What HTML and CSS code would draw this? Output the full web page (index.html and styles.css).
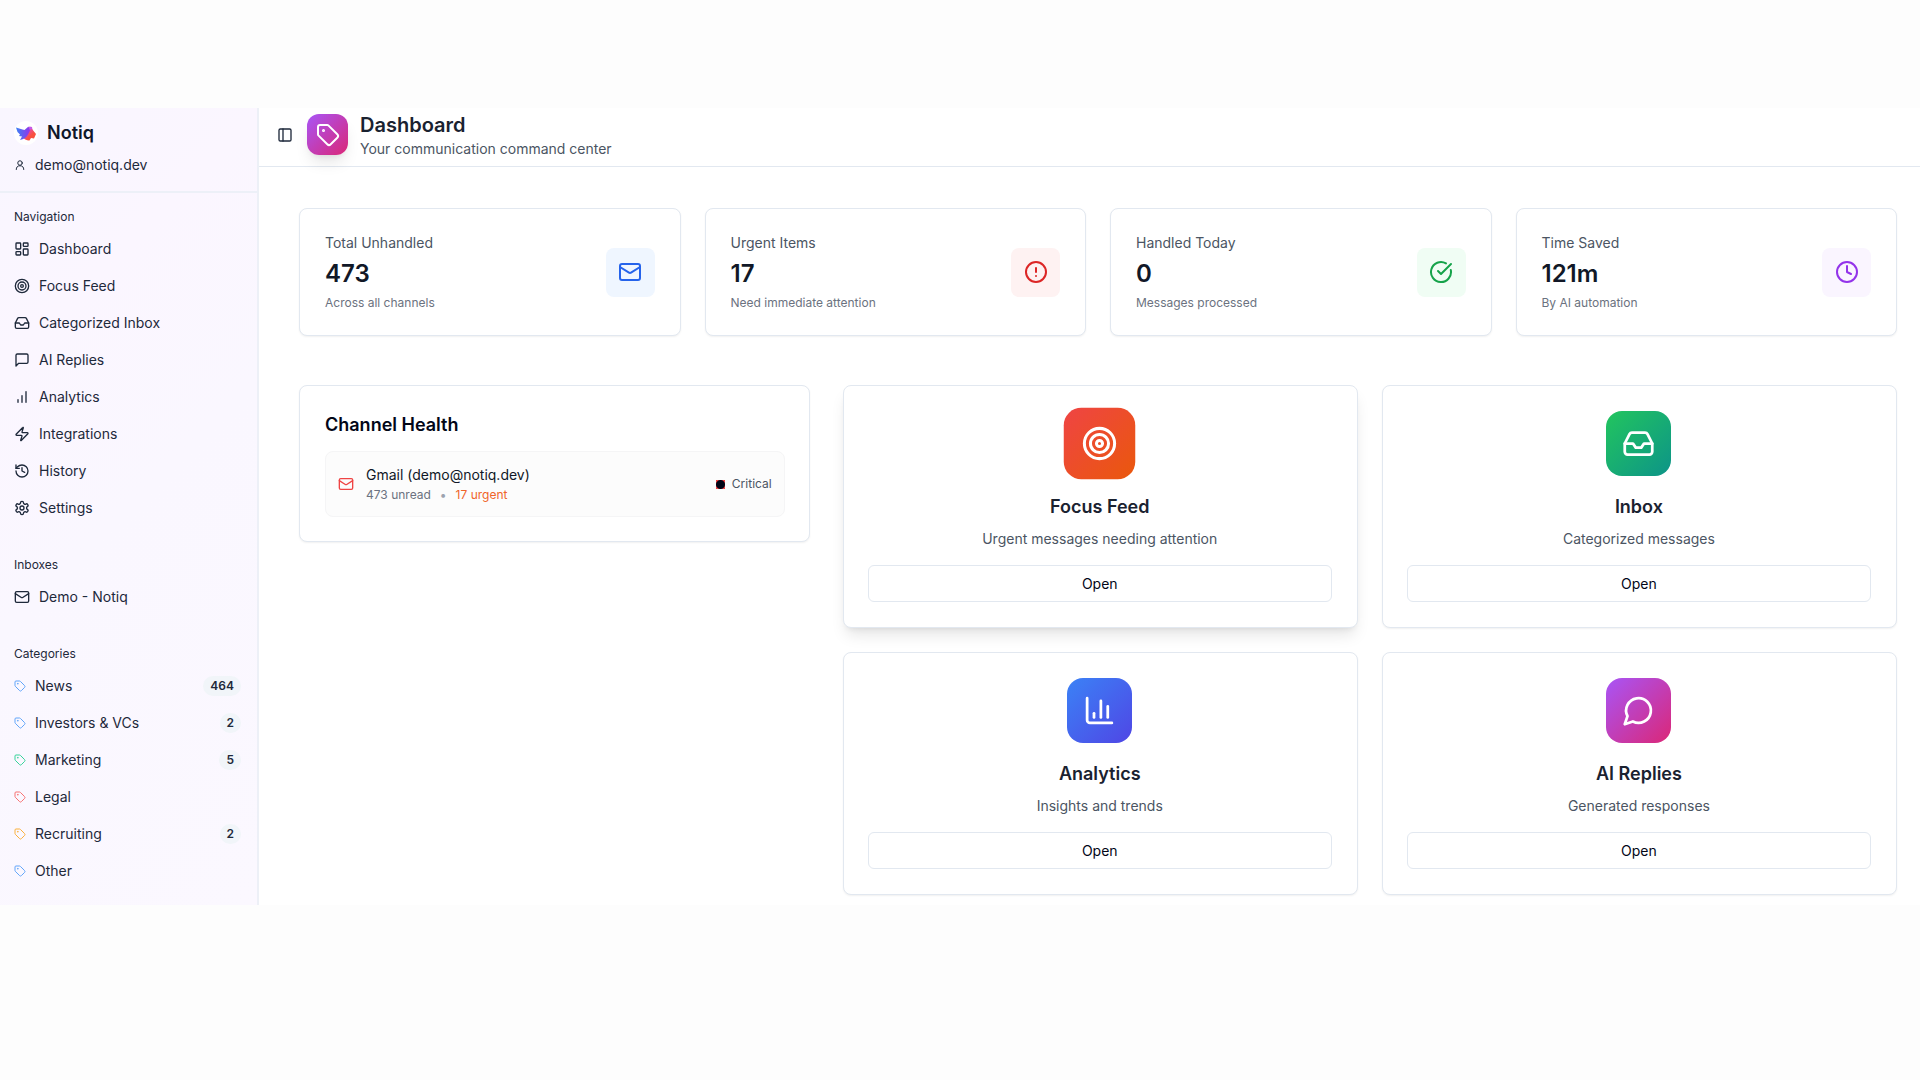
FILE: index.html
```html
<!DOCTYPE html>
<html lang="en">
<head>
    <meta charset="UTF-8">
    <meta name="viewport" content="width=device-width, initial-scale=1.0">
    <title>Notiq - Dashboard</title>
    <link rel="stylesheet" href="styles.css">
</head>
<body>
    <!-- icon sprite -->
    <svg class="sprite" aria-hidden="true">
        <symbol id="user" viewBox="0 0 24 24"><circle cx="12" cy="8" r="4.500"/><path d="M19.500 21a7.500 7.500 0 0 0-15 0"/></symbol>
        <symbol id="dashboard" viewBox="0 0 24 24"><rect width="7" height="9" x="3" y="3" rx="1"/><rect width="7" height="5" x="14" y="3" rx="1"/><rect width="7" height="9" x="14" y="12" rx="1"/><rect width="7" height="5" x="3" y="16" rx="1"/></symbol>
        <symbol id="target" viewBox="0 0 24 24"><circle cx="12" cy="12" r="10"/><circle cx="12" cy="12" r="6"/><circle cx="12" cy="12" r="2"/></symbol>
        <symbol id="inbox" viewBox="0 0 24 24"><path d="M22 12h-6l-2 3h-4l-2-3H2"/><path d="M5.45 5.11 2 12v6a2 2 0 0 0 2 2h16a2 2 0 0 0 2-2v-6l-3.45-6.89A2 2 0 0 0 16.76 4H7.24a2 2 0 0 0-1.79 1.11z"/></symbol>
        <symbol id="message" viewBox="0 0 24 24"><path d="M21 15a2 2 0 0 1-2 2H7l-4 4V5a2 2 0 0 1 2-2h14a2 2 0 0 1 2 2z"/></symbol>
        <symbol id="bars" viewBox="0 0 24 24"><path d="M12 20V10"/><path d="M18 20V4"/><path d="M6 20v-4"/></symbol>
        <symbol id="zap" viewBox="0 0 24 24"><path d="M4 14a1 1 0 0 1-.78-1.63l9.9-10.2a.5.5 0 0 1 .86.46l-1.92 6.02A1 1 0 0 0 13 10h7a1 1 0 0 1 .78 1.63l-9.9 10.2a.5.5 0 0 1-.86-.46l1.92-6.02A1 1 0 0 0 11 14z"/></symbol>
        <symbol id="history" viewBox="0 0 24 24"><path d="M3 12a9 9 0 1 0 9-9 9.75 9.75 0 0 0-6.74 2.74L3 8"/><path d="M3 3v5h5"/><path d="M12 7v5l4 2"/></symbol>
        <symbol id="settings" viewBox="0 0 24 24"><path d="M12.22 2h-.44a2 2 0 0 0-2 2v.18a2 2 0 0 1-1 1.73l-.43.25a2 2 0 0 1-2 0l-.15-.08a2 2 0 0 0-2.73.73l-.22.38a2 2 0 0 0 .73 2.73l.15.1a2 2 0 0 1 1 1.72v.51a2 2 0 0 1-1 1.74l-.15.09a2 2 0 0 0-.73 2.73l.22.38a2 2 0 0 0 2.73.73l.15-.08a2 2 0 0 1 2 0l.43.25a2 2 0 0 1 1 1.73V20a2 2 0 0 0 2 2h.44a2 2 0 0 0 2-2v-.18a2 2 0 0 1 1-1.73l.43-.25a2 2 0 0 1 2 0l.15.08a2 2 0 0 0 2.73-.73l.22-.39a2 2 0 0 0-.73-2.73l-.15-.08a2 2 0 0 1-1-1.74v-.5a2 2 0 0 1 1-1.74l.15-.09a2 2 0 0 0 .73-2.73l-.22-.38a2 2 0 0 0-2.73-.73l-.15.08a2 2 0 0 1-2 0l-.43-.25a2 2 0 0 1-1-1.73V4a2 2 0 0 0-2-2z"/><circle cx="12" cy="12" r="3"/></symbol>
        <symbol id="mail" viewBox="0 0 24 24"><rect width="20" height="16" x="2" y="4" rx="2"/><path d="m22 7-8.97 5.7a1.94 1.94 0 0 1-2.06 0L2 7"/></symbol>
        <symbol id="tag" viewBox="0 0 24 24"><path d="M12.586 2.586A2 2 0 0 0 11.172 2H4a2 2 0 0 0-2 2v7.172a2 2 0 0 0 .586 1.414l8.704 8.704a2.426 2.426 0 0 0 3.42 0l6.58-6.58a2.426 2.426 0 0 0 0-3.42z"/><circle cx="7.5" cy="7.5" r=".5" fill="currentColor"/></symbol>
        <symbol id="panel" viewBox="0 0 24 24"><rect width="18" height="18" x="3" y="3" rx="2"/><path d="M9 3v18"/></symbol>
        <symbol id="alert" viewBox="0 0 24 24"><circle cx="12" cy="12" r="10"/><path d="M12 8v4"/><path d="M12 16h.01"/></symbol>
        <symbol id="check" viewBox="0 0 24 24"><path d="M21.801 10A10 10 0 1 1 17 3.335"/><path d="m9 11 3 3L22 4"/></symbol>
        <symbol id="clock" viewBox="0 0 24 24"><circle cx="12" cy="12" r="10"/><path d="M12 6v6l4 2"/></symbol>
        <symbol id="chart" viewBox="0 0 24 24"><path d="M3 3v16a2 2 0 0 0 2 2h16"/><path d="M18 17V9"/><path d="M13 17V5"/><path d="M8 17v-3"/></symbol>
        <symbol id="chat" viewBox="0 0 24 24"><path d="M7.9 20A9 9 0 1 0 4 16.1L2 22Z"/></symbol>
    </svg>

    <div class="app">
        <aside class="sidebar">
            <div class="sidebar-header">
                <div class="brand">
                    <svg class="logo" viewBox="0 0 24 24" aria-hidden="true">
                        <defs>
                            <linearGradient id="wing" x1="0" y1="0" x2="1" y2="0">
                                <stop offset="0" stop-color="#3b82f6"/>
                                <stop offset="1" stop-color="#9333ea"/>
                            </linearGradient>
                            <linearGradient id="tail" x1="0" y1="0" x2="1" y2="1">
                                <stop offset="0" stop-color="#d946ef"/>
                                <stop offset="0.6" stop-color="#f9503f"/>
                            </linearGradient>
                        </defs>
                        <circle cx="12" cy="12" r="12" fill="#fff"/>
                        <path d="M11 10 15.500 5.500l2.500.5.5 3-4 4z" fill="#c65be6"/>
                        <path d="M10 13.500c2-3 5-4.500 8-5.500l4 5-2 4.500-3-.5-1.500 2.500c-2.500.3-4.500-1-6-2.500z" fill="url(#tail)"/>
                        <path d="M2 6.500 8.500 8.500 10.500 9l4-3.500 1.500 4-2 4c-1.500 3-4.500 5-8 5.500l2-3.500-3-.5 1-1.500-2.500-2.500z" fill="url(#wing)"/>
                    </svg>
                    <span>Notiq</span>
                </div>
                <div class="account">
                    <svg class="icon icon-xs"><use href="#user"/></svg>
                    <span>demo@notiq.dev</span>
                </div>
            </div>

            <nav class="sidebar-nav">
                <h2 class="group-label">Navigation</h2>
                <ul class="menu">
                    <li><a href="#"><svg class="icon icon-sm"><use href="#dashboard"/></svg>Dashboard</a></li>
                    <li><a href="#"><svg class="icon icon-sm"><use href="#target"/></svg>Focus Feed</a></li>
                    <li><a href="#"><svg class="icon icon-sm"><use href="#inbox"/></svg>Categorized Inbox</a></li>
                    <li><a href="#"><svg class="icon icon-sm"><use href="#message"/></svg>AI Replies</a></li>
                    <li><a href="#"><svg class="icon icon-sm"><use href="#bars"/></svg>Analytics</a></li>
                    <li><a href="#"><svg class="icon icon-sm"><use href="#zap"/></svg>Integrations</a></li>
                    <li><a href="#"><svg class="icon icon-sm"><use href="#history"/></svg>History</a></li>
                    <li><a href="#"><svg class="icon icon-sm"><use href="#settings"/></svg>Settings</a></li>
                </ul>

                <h2 class="group-label">Inboxes</h2>
                <ul class="menu">
                    <li><a href="#"><svg class="icon icon-sm"><use href="#mail"/></svg>Demo - Notiq</a></li>
                </ul>

                <h2 class="group-label">Categories</h2>
                <ul class="menu">
                    <li><a href="#"><svg class="icon icon-xs tag-blue"><use href="#tag"/></svg>News<span class="count">464</span></a></li>
                    <li><a href="#"><svg class="icon icon-xs tag-blue"><use href="#tag"/></svg>Investors &amp; VCs<span class="count">2</span></a></li>
                    <li><a href="#"><svg class="icon icon-xs tag-green"><use href="#tag"/></svg>Marketing<span class="count">5</span></a></li>
                    <li><a href="#"><svg class="icon icon-xs tag-red"><use href="#tag"/></svg>Legal</a></li>
                    <li><a href="#"><svg class="icon icon-xs tag-amber"><use href="#tag"/></svg>Recruiting<span class="count">2</span></a></li>
                    <li><a href="#"><svg class="icon icon-xs tag-blue"><use href="#tag"/></svg>Other</a></li>
                </ul>
            </nav>
        </aside>

        <div class="page">
            <header class="topbar">
                <button class="toggle" type="button" aria-label="Toggle Sidebar"><svg class="icon icon-sm"><use href="#panel"/></svg></button>
                <div class="topbar-icon purple"><svg class="icon icon-md"><use href="#tag"/></svg></div>
                <div>
                    <h1>Dashboard</h1>
                    <p class="subtitle">Your communication command center</p>
                </div>
            </header>

            <main class="content">
                <section class="stats">
                    <div class="card stat">
                        <div>
                            <p class="stat-label">Total Unhandled</p>
                            <p class="stat-value">473</p>
                            <p class="stat-note">Across all channels</p>
                        </div>
                        <div class="stat-icon stat-blue"><svg class="icon icon-md"><use href="#mail"/></svg></div>
                    </div>
                    <div class="card stat">
                        <div>
                            <p class="stat-label">Urgent Items</p>
                            <p class="stat-value">17</p>
                            <p class="stat-note">Need immediate attention</p>
                        </div>
                        <div class="stat-icon stat-red"><svg class="icon icon-md"><use href="#alert"/></svg></div>
                    </div>
                    <div class="card stat">
                        <div>
                            <p class="stat-label">Handled Today</p>
                            <p class="stat-value">0</p>
                            <p class="stat-note">Messages processed</p>
                        </div>
                        <div class="stat-icon stat-green"><svg class="icon icon-md"><use href="#check"/></svg></div>
                    </div>
                    <div class="card stat">
                        <div>
                            <p class="stat-label">Time Saved</p>
                            <p class="stat-value">121m</p>
                            <p class="stat-note">By AI automation</p>
                        </div>
                        <div class="stat-icon stat-purple"><svg class="icon icon-md"><use href="#clock"/></svg></div>
                    </div>
                </section>

                <section class="columns">
                    <div class="card health">
                        <h2>Channel Health</h2>
                        <div class="channel">
                            <svg class="icon icon-sm channel-icon"><use href="#mail"/></svg>
                            <div class="channel-info">
                                <p class="channel-name">Gmail (demo@notiq.dev)</p>
                                <p class="channel-meta"><span>473 unread</span><span class="bullet">•</span><span class="urgent">17 urgent</span></p>
                            </div>
                            <span class="status-dot"></span>
                            <span class="status">Critical</span>
                        </div>
                    </div>

                    <div class="actions">
                        <div class="card action active">
                            <div class="action-icon orange"><svg class="icon icon-lg"><use href="#target"/></svg></div>
                            <h3>Focus Feed</h3>
                            <p>Urgent messages needing attention</p>
                            <button class="open" type="button">Open</button>
                        </div>
                        <div class="card action">
                            <div class="action-icon green"><svg class="icon icon-lg"><use href="#inbox"/></svg></div>
                            <h3>Inbox</h3>
                            <p>Categorized messages</p>
                            <button class="open" type="button">Open</button>
                        </div>
                        <div class="card action">
                            <div class="action-icon blue"><svg class="icon icon-lg"><use href="#chart"/></svg></div>
                            <h3>Analytics</h3>
                            <p>Insights and trends</p>
                            <button class="open" type="button">Open</button>
                        </div>
                        <div class="card action">
                            <div class="action-icon purple"><svg class="icon icon-lg"><use href="#chat"/></svg></div>
                            <h3>AI Replies</h3>
                            <p>Generated responses</p>
                            <button class="open" type="button">Open</button>
                        </div>
                    </div>
                </section>
            </main>
        </div>
    </div>
</body>
</html>
```
FILE: styles.css
```css
* {
    box-sizing: border-box;
    margin: 0;
    padding: 0;
}

body {
    padding-top: 108px;
    background-color: #fdfdfd;
    color: #1e293b;
    font-family: Inter, "Liberation Sans", sans-serif;
    font-size: 14px;
    line-height: 20px;
}

button {
    font: inherit;
    color: inherit;
    cursor: pointer;
}

.sprite {
    display: none;
}

.icon {
    flex: none;
    fill: none;
    stroke: currentColor;
    stroke-width: 2;
    stroke-linecap: round;
    stroke-linejoin: round;
}

.icon-xs {
    width: 12px;
    height: 12px;
}

.icon-sm {
    width: 16px;
    height: 16px;
}

.icon-md {
    width: 24px;
    height: 24px;
}

.icon-lg {
    width: 33px;
    height: 33px;
}

.app {
    display: flex;
    background-color: white;
}

/* Sidebar */
.sidebar {
    flex: none;
    width: 259px;
    border-right: 2px solid #edf0f7;
    background: linear-gradient(135deg, #f9f6ff, #fbf6ff 25%, #faf7ff 50%, #fbf8ff);
}

.sidebar-header {
    padding: 13px 14px 16px;
    border-bottom: 2px solid #edf0f8;
}

.brand {
    display: flex;
    align-items: center;
    gap: 9px;
    color: #0f172a;
    font-size: 18px;
    font-weight: 600;
    line-height: 24px;
}

.logo {
    width: 24px;
    height: 24px;
}

.account {
    display: flex;
    align-items: center;
    gap: 9px;
    margin-top: 10px;
}

.sidebar-nav {
    padding: 8px 16px 16px 14px;
}

.group-label {
    padding: 8px 0 5px;
    font-size: 12px;
    font-weight: 400;
    line-height: 16px;
}

.menu {
    list-style: none;
    margin-bottom: 23px;
}

.menu:last-child {
    margin-bottom: 0;
}

.menu a {
    display: flex;
    align-items: center;
    gap: 9px;
    height: 37px;
    color: inherit;
    text-decoration: none;
}

.count {
    margin-left: auto;
    padding: 2px 7px;
    border-radius: 10px;
    background-color: #f1f5f9;
    font-size: 12px;
    font-weight: 600;
    line-height: 16px;
}

.tag-blue {
    color: #60a5fa;
}

.tag-green {
    color: #34d399;
}

.tag-red {
    color: #f87171;
}

.tag-amber {
    color: #fbb03b;
}

/* Top bar */
.page {
    flex: 1;
    min-width: 0;
}

.topbar {
    display: flex;
    align-items: center;
    height: 59px;
    padding: 0 18px 5px;
    border-bottom: 1px solid #e2e8f0;
}

.toggle {
    display: flex;
    margin-right: 14px;
    border: none;
    background: none;
}

.topbar-icon {
    display: flex;
    align-items: center;
    justify-content: center;
    width: 41px;
    height: 41px;
    margin-right: 12px;
    border-radius: 12px;
    color: white;
    box-shadow: 0 10px 15px -3px rgba(0, 0, 0, 0.1), 0 4px 6px -4px rgba(0, 0, 0, 0.1);
}

h1 {
    color: #1a2230;
    font-size: 20px;
    font-weight: 600;
    line-height: 28px;
}

.subtitle {
    color: #4b5563;
}

/* Content */
.content {
    padding: 41px 23px 10px 40px;
}

.card {
    padding: 25px 25px 25px 24px;
    border: 1px solid #e2e8f0;
    border-radius: 8px;
    background-color: white;
    box-shadow: 0 1px 2px rgba(0, 0, 0, 0.06);
}

.stats {
    display: grid;
    grid-template-columns: repeat(4, 1fr);
    gap: 24px;
    margin-bottom: 49px;
}

.stat {
    display: flex;
    align-items: center;
    justify-content: space-between;
    padding: 24px 25px;
}

.stat-label {
    color: #4b5563;
}

.stat-value {
    margin: 4px 0;
    color: #111827;
    font-size: 24px;
    font-weight: 600;
    line-height: 34px;
}

.stat-note {
    color: #6b7280;
    font-size: 12px;
    line-height: 16px;
}

.stat-icon {
    display: flex;
    align-items: center;
    justify-content: center;
    width: 49px;
    height: 49px;
    border-radius: 8px;
}

.stat-blue {
    background-color: #eff6ff;
    color: #2563eb;
}

.stat-red {
    background-color: #fef2f2;
    color: #dc2626;
}

.stat-green {
    background-color: #f0fdf4;
    color: #16a34a;
}

.stat-purple {
    background-color: #faf5ff;
    color: #9333ea;
}

.columns {
    display: grid;
    grid-template-columns: repeat(3, 1fr);
    align-items: start;
    gap: 33px;
}

.health {
    padding: 25px 24px 24px 25px;
}

.health h2 {
    margin-bottom: 12px;
    color: #020617;
    font-size: 18px;
    font-weight: 600;
    line-height: 28px;
}

.channel {
    display: flex;
    align-items: center;
    padding: 12px;
    border: 1px solid #f5f5f6;
    border-radius: 8px;
    background-color: #fcfcfc;
}

.channel-icon {
    margin-right: 12px;
    color: #ef4444;
}

.channel-info {
    flex: 1;
}

.channel-name {
    color: #111827;
    line-height: 22px;
}

.channel-meta {
    display: flex;
    gap: 9px;
    color: #6b7280;
    font-size: 12px;
    line-height: 18px;
}

.bullet {
    color: #9ca3af;
}

.urgent {
    color: #f0642a;
}

.status-dot {
    width: 9px;
    height: 9px;
    margin-right: 7px;
    background: radial-gradient(circle, #020617 4px, #ef4444 5px);
}

.status {
    color: #4b5563;
    font-size: 12px;
}

.actions {
    grid-column: span 2;
    display: grid;
    grid-template-columns: repeat(2, 1fr);
    gap: 24px;
}

.action {
    display: flex;
    flex-direction: column;
    align-items: center;
}

.action.active {
    box-shadow: 0 10px 15px -3px rgba(0, 0, 0, 0.1), 0 4px 6px -4px rgba(0, 0, 0, 0.1);
}

.action-icon {
    display: flex;
    align-items: center;
    justify-content: center;
    width: 65px;
    height: 65px;
    margin-bottom: 17px;
    border-radius: 16px;
    color: white;
}

.active .action-icon {
    transform: scale(1.1);
}

.orange {
    background: linear-gradient(135deg, #ef4444, #ea580c);
}

.green {
    background: linear-gradient(135deg, #22c55e, #0d9488);
}

.blue {
    background: linear-gradient(135deg, #3b82f6, #4f46e5);
}

.purple {
    background: linear-gradient(135deg, #a855f7, #db2777);
}

.action h3 {
    margin-bottom: 8px;
    color: #1a2230;
    font-size: 18px;
    font-weight: 600;
    line-height: 28px;
}

.action p {
    margin-bottom: 16px;
    color: #4b5563;
}

.open {
    width: 100%;
    height: 37px;
    border: 1px solid #e2e8f0;
    border-radius: 6px;
    background-color: white;
    color: #020617;
}
```
